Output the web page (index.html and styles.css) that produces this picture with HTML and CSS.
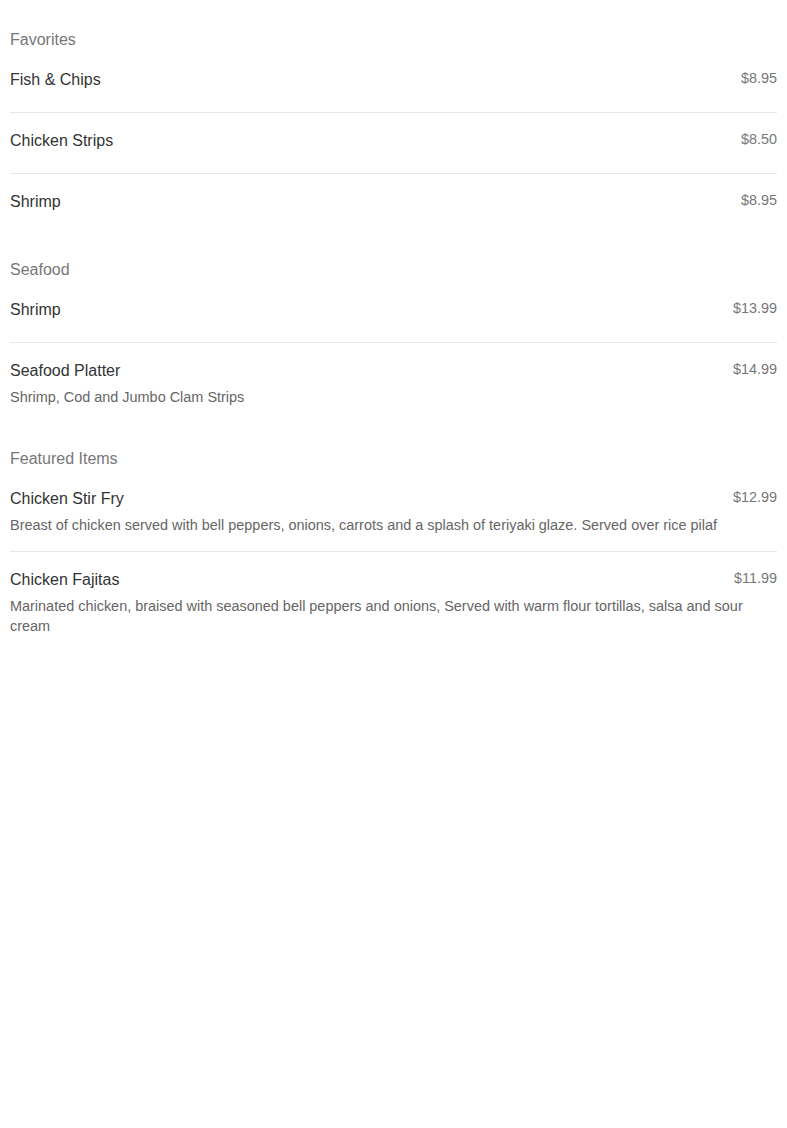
FILE: index.html
```html
<!DOCTYPE html>
<html lang="en">
<head>
<meta charset="utf-8">
<title>Menu</title>
<link rel="stylesheet" href="styles.css">
</head>
<body>
<main class="menu">
  <section class="section">
    <h2 class="section-title">Favorites</h2>
    <div class="item">
      <div class="item-name">Fish &amp; Chips</div>
      <div class="item-price">$8.95</div>
    </div>
    <div class="item">
      <div class="item-name">Chicken Strips</div>
      <div class="item-price">$8.50</div>
    </div>
    <div class="item">
      <div class="item-name">Shrimp</div>
      <div class="item-price">$8.95</div>
    </div>
  </section>
  <section class="section">
    <h2 class="section-title">Seafood</h2>
    <div class="item">
      <div class="item-name">Shrimp</div>
      <div class="item-price">$13.99</div>
    </div>
    <div class="item">
      <div class="item-name">Seafood Platter</div>
      <div class="item-price">$14.99</div>
      <p class="item-desc">Shrimp, Cod and Jumbo Clam Strips</p>
    </div>
  </section>
  <section class="section">
    <h2 class="section-title">Featured Items</h2>
    <div class="item">
      <div class="item-name">Chicken Stir Fry</div>
      <div class="item-price">$12.99</div>
      <p class="item-desc">Breast of chicken served with bell peppers, onions, carrots and a splash of teriyaki glaze. Served over rice pilaf</p>
    </div>
    <div class="item">
      <div class="item-name">Chicken Fajitas</div>
      <div class="item-price">$11.99</div>
      <p class="item-desc">Marinated chicken, braised with seasoned bell peppers and onions, Served with warm flour tortillas, salsa and sour cream</p>
    </div>
  </section>
</main>
</body>
</html>
```
FILE: styles.css
```css
html, body {
  margin: 0;
  padding: 0;
  background: #ffffff;
}

body {
  font-family: "Liberation Sans", Arial, sans-serif;
  color: #333333;
}

.menu {
  padding: 28px 10px 0 10px;
  display: flex;
  flex-direction: column;
  gap: 24px;
}

.section-title {
  margin: 0;
  font-size: 16px;
  line-height: 24px;
  font-weight: normal;
  color: #777777;
}

.item {
  display: grid;
  grid-template-columns: 1fr auto;
  padding: 16px 0;
  border-bottom: 1px solid #e6e6e6;
}

.item:last-child {
  border-bottom: none;
}

.item-name {
  font-size: 16px;
  line-height: 23px;
  color: #333333;
  margin-bottom: 5px;
}

.item-price {
  font-size: 14.4px;
  line-height: 21px;
  color: #777777;
  text-align: right;
}

.item-desc {
  grid-column: 1 / -1;
  margin: 0;
  font-size: 14.45px;
  line-height: 20px;
  color: #666666;
}
```
